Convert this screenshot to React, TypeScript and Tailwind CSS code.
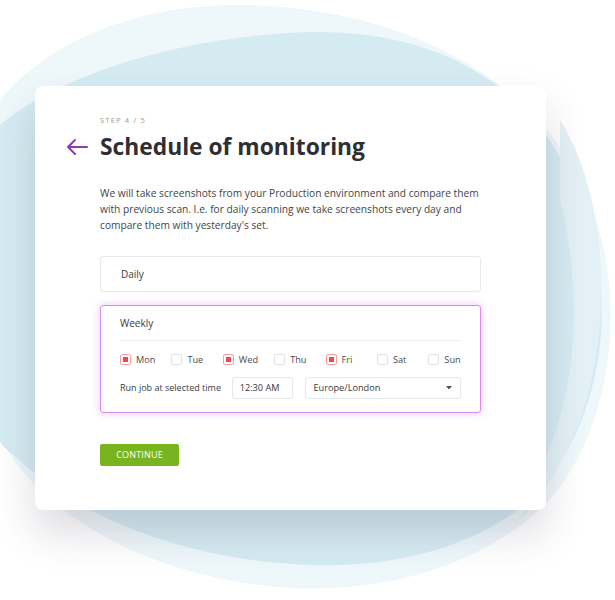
import { useState } from 'react';

const DAYS = [
  { label: 'Mon', on: true },
  { label: 'Tue', on: false },
  { label: 'Wed', on: true },
  { label: 'Thu', on: false },
  { label: 'Fri', on: true },
  { label: 'Sat', on: false },
  { label: 'Sun', on: false },
];

// ─── Background blobs ───────────────────────────────────────────
function Blobs() {
  return (
    <svg className="absolute inset-0 pointer-events-none" width="615" height="600" viewBox="0 0 615 600">
      <path
        d="M 0 100 C 50 40 140 4 240 5 C 390 6 530 70 585 190 C 630 290 615 430 545 505 C 470 575 370 592 290 588 C 190 582 95 545 35 485 C 10 460 0 440 0 420 Z"
        fill="#eef7fa"
      />
      <path
        d="M 0 125 C 60 75 180 36 310 32 C 440 30 540 85 585 210 C 620 310 600 430 530 500 C 460 560 360 572 270 562 C 170 552 80 515 25 465 C 10 452 0 445 0 440 Z"
        fill="#d5ebf2"
      />
      <path
        d="M 560 120 C 610 200 612 330 580 420 C 560 470 540 500 520 520 L 540 470 C 575 400 585 300 560 200 Z"
        fill="#e3f1f6"
      />
    </svg>
  );
}

function Checkbox({ on }: { on: boolean }) {
  return on ? (
    <span className="w-[11px] h-[11px] rounded-[2px] border border-[#f7a1a1] bg-white flex items-center justify-center">
      <span className="w-[5px] h-[5px] bg-[#f2474f]" />
    </span>
  ) : (
    <span className="w-[11px] h-[11px] rounded-[2px] border border-[#e2e2e2] bg-white" />
  );
}

export default function App() {
  const [days] = useState(DAYS);

  return (
    <div className="relative w-[615px] h-[600px] bg-white overflow-hidden font-['Open_Sans','Noto_Sans',sans-serif]">
      <Blobs />

      <div className="relative ml-[35px] mt-[86px] w-[511px] h-[424px] bg-white rounded-[8px] shadow-[0_22px_40px_rgba(60,50,80,0.18)] pl-[65px] pt-[28px]">
        {/* Header */}
        <div className="text-[7.5px] tracking-[0.16em] text-[#9a9a9a] leading-[12px]">STEP 4 / 5</div>
        <div className="relative flex items-center mt-[6px] h-[30px]">
          <svg className="absolute left-[-34px] top-[7px]" width="22" height="16" viewBox="0 0 22 16">
            <path d="M 21 8 H 2 M 9 1 L 2 8 L 9 15" fill="none" stroke="#8f3ab8" strokeWidth="2" strokeLinecap="round" strokeLinejoin="round" />
          </svg>
          <h1 className="text-[22.8px] font-bold text-[#2f2f33] leading-[30px]">Schedule of monitoring</h1>
        </div>

        <p className="mt-[23px] w-[385px] text-[10.2px] leading-[16px] text-[#444448]">
          We will take screenshots from your Production environment and compare them with previous scan. I.e. for daily
          scanning we take screenshots every day and compare them with yesterday's set.
        </p>

        {/* Options */}
        <div className="mt-[23px] w-[381px] flex flex-col gap-[13px]">
          <div className="h-[36px] rounded-[3px] border border-[#e8e8ec] flex items-center px-[20px] text-[10px] text-[#3a3a3e]">
            Daily
          </div>

          <div className="h-[108px] rounded-[3px] border-[1.5px] border-[#d98cf0] shadow-[0_0_8px_rgba(214,130,240,0.45)] px-[19px]">
            <div className="h-[35px] flex items-center text-[10px] text-[#3a3a3e] border-b border-[#ececef]">Weekly</div>

            <div className="flex mt-[12px] h-[14px] items-center">
              {days.map((d) => (
                <div key={d.label} className="w-[51.4px] flex items-center gap-[5px] shrink-0">
                  <Checkbox on={d.on} />
                  <span className="text-[9.2px] text-[#4a4a4e]">{d.label}</span>
                </div>
              ))}
            </div>

            <div className="flex items-center mt-[10px]">
              <span className="w-[112px] text-[9px] text-[#3a3a3e]">Run job at selected time</span>
              <div className="w-[62px] h-[22px] rounded-[3px] border border-[#e6e6ea] flex items-center px-[7px] text-[9.2px] text-[#3a3a3e]">
                12:30 AM
              </div>
              <div className="ml-[12px] w-[156px] h-[22px] rounded-[3px] border border-[#e6e6ea] flex items-center justify-between pl-[7px] pr-[8px] text-[9.2px] text-[#3a3a3e]">
                <span>Europe/London</span>
                <svg width="6" height="4" viewBox="0 0 6 4">
                  <path d="M 0 0 H 6 L 3 3.5 Z" fill="#555" />
                </svg>
              </div>
            </div>
          </div>
        </div>

        <button className="mt-[31px] w-[79px] h-[22px] rounded-[2px] bg-[#78b41f] text-white text-[9px] tracking-[0.02em] flex items-center justify-center">
          CONTINUE
        </button>
      </div>
    </div>
  );
}
